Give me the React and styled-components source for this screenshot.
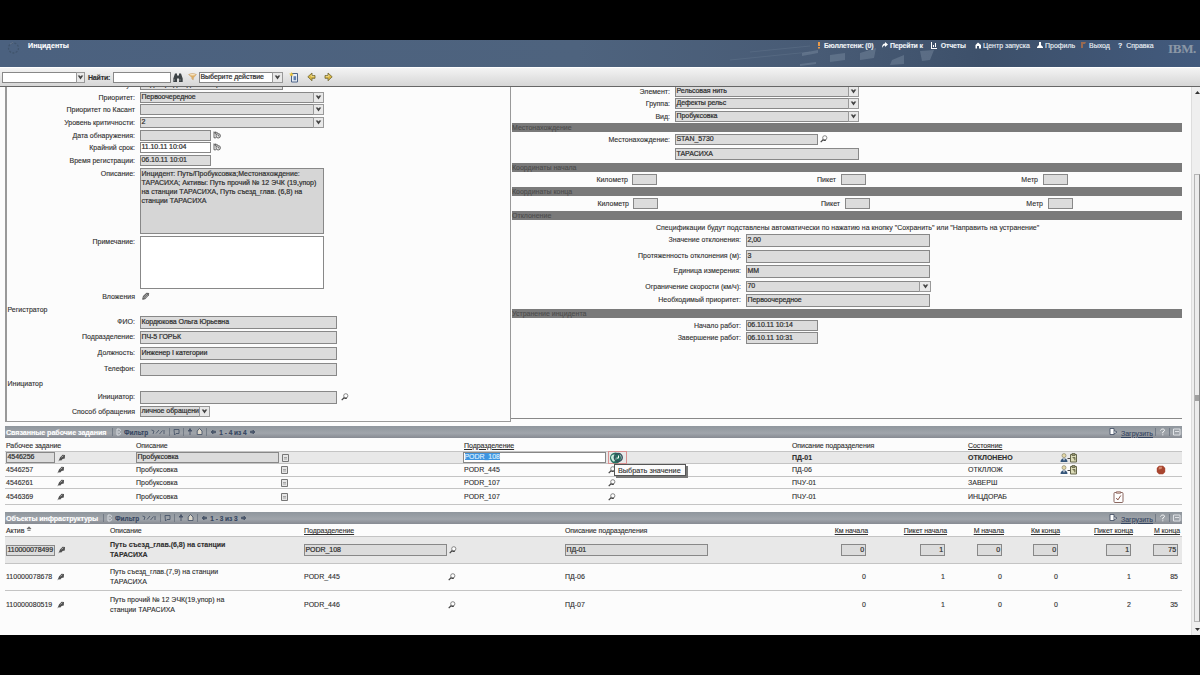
import React from "react";
import styled, { createGlobalStyle, css } from "styled-components";

const Global = createGlobalStyle`
  * { box-sizing: border-box; }
  body { margin: 0; background: #000; }
`;

const Screen = styled.div`
  width: 1200px;
  height: 675px;
  padding: 40px 0;
  background: #000;
  overflow: hidden;
  font-family: "Liberation Sans", sans-serif;
  font-size: 7px;
  color: #303030;
  -webkit-text-stroke: 0.12px currentColor;
  white-space: nowrap;
`;

/* ---------- header ---------- */
const Header = styled.header`
  position: relative;
  height: 27px;
  display: flex;
  justify-content: space-between;
  background: linear-gradient(90deg, #4b617f 0%, #4e637e 48%, #485b75 68%, #3d506a 82%, #425a7d 100%);
`;
const Skyline = styled.svg`
  position: absolute;
  left: 720px;
  top: 0;
`;
const Brand = styled.div`
  display: flex;
  padding: 1px 0 0 7px;
  gap: 6px;
  color: #fff;
  font-weight: bold;
  font-size: 7.2px;
  line-height: 10px;
`;
const Links = styled.nav`
  position: relative;
  display: flex;
  height: 11px;
  align-items: center;
  color: #eef2f6;
`;
const HeaderLink = styled.span`
  display: flex;
  align-items: center;
  gap: 2px;
  width: ${(p) => p.$w}px;
  font-weight: ${(p) => (p.$bold ? "bold" : "normal")};
  font-size: 7px;
  letter-spacing: ${(p) => (p.$bold ? -0.2 : 0)}px;
`;
const Logo = styled.span`
  font-family: "Liberation Serif", serif;
  font-weight: bold;
  font-size: 13px;
  line-height: 13px;
  height: 8px;
  width: 32px;
  letter-spacing: -0.3px;
  color: #8b97a6;
`;

/* ---------- toolbar ---------- */
const Toolbar = styled.div`
  height: 20px;
  display: flex;
  align-items: center;
  padding-left: 2px;
  border-top: 1px solid #fff;
  border-bottom: 1px solid #666;
  background: linear-gradient(#f4f4f4, #d6d6d6);
`;
const FindLabel = styled.span`
  width: 25px;
  margin-left: 3px;
  font-weight: bold;
  letter-spacing: -0.2px;
`;
const ToolIcon = styled.span`
  display: flex;
  margin-left: ${(p) => p.$gap}px;
`;

/* ---------- body ---------- */
const Body = styled.div`
  height: 548px;
  display: flex;
  background: #fcfcfc;
  overflow: hidden;
`;
const Content = styled.main`
  width: 1191px;
  padding-left: 5px;
`;
const Scrollbar = styled.aside`
  width: 9px;
  display: flex;
  flex-direction: column;
  align-items: center;
  padding: 4px 0 4px 2px;
  border-left: 1px solid #ddd;
  background: #efefef;
`;
const Thumb = styled.div`
  width: 6px;
  height: 448px;
  margin: auto 0 6px;
  display: flex;
  align-items: center;
  justify-content: center;
  border: 1px solid #b5b5b5;
  border-right-color: #8a8a8a;
  background: #ececec;
`;
const Panels = styled.section`
  display: flex;
  align-items: flex-start;
  height: 339px;
`;
const LeftPanel = styled.div`
  width: 506px;
  height: 335px;
  border: solid #999;
  border-width: 0 1px 1px 2px;
  overflow: hidden;
`;
const RightPanel = styled.div`
  width: 671px;
  height: 332px;
  border-bottom: 1px solid #888;
  overflow: hidden;
`;
const Row = styled.div`
  display: flex;
  align-items: flex-start;
  height: ${(p) => p.$h}px;
  margin-top: ${(p) => p.$mt || 0}px;
`;
const Label = styled.span`
  width: ${(p) => p.$w}px;
  margin-right: ${(p) => p.$gap ?? 5}px;
  text-align: right;
  line-height: 12px;
`;
const Field = styled.span`
  width: ${(p) => p.$w}px;
  height: ${(p) => p.$h || 11}px;
  padding: 0 ${(p) => (p.$right ? 1 : 0)}px 0 0.5px;
  border: 1px solid #888;
  background: ${(p) => (p.$white ? "#fff" : "#dcdcdc")};
  line-height: ${(p) => (p.$h || 11) - 2.5}px;
  text-align: ${(p) => (p.$right ? "right" : "left")};
  letter-spacing: -0.06px;
  -webkit-text-stroke: 0.22px currentColor;
  overflow: hidden;
`;
const Arrow = styled.span`
  width: ${(p) => p.$w || 11}px;
  height: ${(p) => p.$h || 11}px;
  margin-left: -1px;
  display: flex;
  align-items: center;
  justify-content: center;
  border: 1px solid #999;
  background: #e9e9e9;
`;
const Area = styled.div`
  width: 184px;
  height: ${(p) => p.$h}px;
  padding: 1px 0 0 0.5px;
  border: 1px solid #888;
  background: ${(p) => (p.$white ? "#fff" : "#d6d6d6")};
  line-height: 8.9px;
  -webkit-text-stroke: 0.2px currentColor;
`;
const GroupTitle = styled.div`
  height: ${(p) => p.$h}px;
  padding-left: 0.5px;
  line-height: 12px;
`;
const Bar = styled.div`
  height: 9px;
  margin: ${(p) => p.$mt}px 0 0 1px;
  background: #7a7a7a;
  color: #4c4c4c;
  line-height: 10px;
`;
const Note = styled.div`
  height: 14px;
  padding-left: 145px;
  line-height: 15px;
`;
const After = styled.span`
  display: flex;
  margin: ${(p) => p.$mt || 1}px 0 0 ${(p) => p.$ml || 2}px;
`;

/* ---------- tables ---------- */
const SectionBar = styled.div`
  width: 1177px;
  height: 12px;
  margin-top: ${(p) => p.$mt || 0}px;
  display: flex;
  align-items: center;
  background: linear-gradient(#8f969d, #a0a5ab 60%, #868a92);
  color: #354560;
`;
const SectionTitle = styled.span`
  width: ${(p) => p.$w}px;
  padding-left: 1px;
  color: #fff;
  font-weight: bold;
  font-size: 7.2px;
  letter-spacing: ${(p) => p.$ls}px;
`;
const BarTools = styled.span`
  display: flex;
  flex: 1;
  align-items: center;
  gap: 3px;
  font-weight: bold;
  font-size: 6.5px;
`;
const Sep = styled.i`
  width: 1px;
  height: 8px;
  background: #737b86;
`;
const BarRight = styled.span`
  display: flex;
  align-items: center;
  gap: 3px;
  padding-right: 1px;
`;
const Download = styled.span`
  text-decoration: underline;
  line-height: 14px;
  width: 31px;
  padding-top: 3px;
`;
const tableOne = css`
  grid-template-columns: 52px 78px 145px 182px 145px 184px 176px 92px 53px 43px 26px;
`;
const tableTwo = css`
  grid-template-columns: 52px 52px 194px 144px 117px 202px 101px 79px 57px 56px 73px 47px 2px;
`;
const GridRow = styled.div`
  ${(p) => (p.$two ? tableTwo : tableOne)}
  display: grid;
  grid-template-rows: 100%;
  align-items: center;
  width: 1177px;
  height: ${(p) => p.$h}px;
  padding-left: 1px;
  border-bottom: ${(p) => (p.$last ? 0 : 1)}px solid #c4c4c4;
  background: ${(p) => (p.$active ? "#e8e8e8" : "transparent")};
`;
const HeadRow = styled(GridRow)`
  padding-top: 2px;
`;
const Cell = styled.span`
  display: flex;
  justify-content: ${(p) => (p.$right ? "flex-end" : "flex-start")};
  padding-right: ${(p) => (p.$right ? 2 : 0)}px;
  font-weight: ${(p) => (p.$bold ? "bold" : "normal")};
  text-decoration: ${(p) => (p.$under ? "underline" : "none")};
  line-height: 10px;
  white-space: pre;
  margin-left: ${(p) => p.$ml || 0}px;
`;
const Heading = styled(Cell)`
  padding-right: 0;
  letter-spacing: -0.07px;
`;
const Selected = styled.mark`
  background: #3d94e0;
  color: #d5e9fb;
`;
const LookupHot = styled.span`
  position: relative;
  display: flex;
  align-items: center;
  width: 19px;
  height: 13px;
  border: 1px solid #d89090;
`;
const Tooltip = styled.span`
  position: absolute;
  left: 5px;
  top: 12px;
  z-index: 2;
  width: 72px;
  height: 12px;
  padding-left: 3px;
  border: 1px solid #555;
  background: #fbfbfb;
  box-shadow: 2px 2px 0 #777;
  font-size: 7.3px;
  line-height: 11px;
`;

/* ---------- icons ---------- */
const Chevron = () => (
  <svg width="7" height="5" viewBox="0 0 7 5">
    <path d="M.7.5h2l.8 1 .8-1h2L3.5 4.4z" fill="#444" />
  </svg>
);
const Lens = () => (
  <svg width="8" height="8" viewBox="0 0 8 8" fill="none">
    <circle cx="4.8" cy="2.8" r="2.1" stroke="#777" strokeWidth=".9" fill="#fff" />
    <path d="M3.3 4.5.7 7.2M3.5 5.4h2.3" stroke="#444" strokeWidth="1.2" />
  </svg>
);
const Pin = () => (
  <svg width="8" height="8" viewBox="0 0 8 8">
    <path d="M.4 7.6 2 3.600 4.600.800l2.400.2-.2 3.600-2.200.3-1.300 1.600-1.600-.3z" fill="#505050" />
    <path d="m3.4 3.300 2-1.500" stroke="#ccc" strokeWidth=".7" />
  </svg>
);
const Clip = () => (
  <svg width="9" height="9" viewBox="0 0 9 9">
    <path d="M1 7.500 2 4 5.500.700l2.700.2-.3 2.300L4.500 7l-2 .8z" fill="#666" />
    <path d="m2.500 6 3.500-4M4 6.300l3-3.500" stroke="#ccc" strokeWidth=".6" />
  </svg>
);
const DateIcon = () => (
  <svg width="8" height="8" viewBox="0 0 8 8" fill="none" stroke="#555" strokeWidth=".9">
    <path d="M1 .5v6.3h2M1 1.800h3.800M2.700.5v3" />
    <circle cx="5.2" cy="4.800" r="2.200" fill="#eee" />
    <path d="M5.2 3.500v1.400h1.200" />
  </svg>
);
const NoteIcon = () => (
  <svg width="7" height="8" viewBox="0 0 7 8">
    <path d="M.5.5h6v7h-6z" fill="#e6e6e6" stroke="#777" />
    <path d="M2 3.500h3M2 5h3" stroke="#888" strokeWidth=".7" />
  </svg>
);
const Binoculars = () => (
  <svg width="10" height="9" viewBox="0 0 10 9" fill="#3d4346">
    <path d="M2 .5h2v2h2v-2h2l1.700 5V9H6V5.500H4V9H.3V5.500z" />
    <path d="M1.200 6v2M7 6v2" stroke="#999" strokeWidth=".7" />
  </svg>
);
const Funnel = () => (
  <svg width="9" height="8" viewBox="0 0 9 8">
    <path d="M.5 1.500C3 .2 6 .2 8.500 1.500L5.700 4.600 5.200 7 3.800 6V4.400z" fill="#dfae63" stroke="#c9a880" strokeWidth=".5" />
    <ellipse cx="4.500" cy="1.800" rx="3" ry=".8" fill="#f5e6c8" />
  </svg>
);
const NewDoc = () => (
  <svg width="10" height="11" viewBox="0 0 10 11">
    <path d="M2.500 1.500h6v8.500h-6z" fill="#e9eef5" stroke="#4d6489" />
    <path d="M4.500 4.200h2.600v4H4.500z" fill="#5f7fae" />
    <path d="m2.400 0 .7 1.600 1.700.3-1.400 1 .3 1.600-1.400-1L.8 4.400l.5-1.600L0 1.700l1.700-.1z" fill="#e6c33f" />
  </svg>
);
const Move = ({ back }) => (
  <svg width="9" height="10" viewBox="0 0 9 10">
    <g transform={back ? "matrix(-1 0 0 1 9 0)" : undefined}>
      <path d="M1 3.500h3V1l4.200 3.800L4 8.800V6.300H1z" fill="#d9b642" stroke="#6d6435" strokeWidth=".8" />
      <path d="M1.800 4.300h3V2.800" stroke="#f6eab0" strokeWidth=".7" fill="none" />
    </g>
  </svg>
);
const Ring = () => (
  <svg width="15" height="15" viewBox="0 0 15 15" fill="none" stroke="#40546c">
    <circle cx="6.500" cy="7" r="5" strokeWidth="1.300" strokeDasharray="2 1.400" />
    <path d="m3 3 3-1.500" stroke="#657489" />
  </svg>
);
const Globe = () => (
  <svg width="15" height="12" viewBox="0 0 15 12">
    <circle cx="6.500" cy="6" r="5.500" fill="#27705f" />
    <path d="M2 5C3 2.500 5 2 6.500 3.200L5 5.500l2.500 2-2.500 2.300C3 9 2 7 2 5z" fill="#c9ecdd" />
    <circle cx="9.300" cy="5.500" r="3.900" fill="none" stroke="#35505c" strokeWidth="1.500" />
    <path d="M9.500 3.500v2.600H7.500" stroke="#fff" fill="none" />
  </svg>
);
const Assign = () => (
  <svg width="18" height="10" viewBox="0 0 18 10">
    <circle cx="4" cy="2.600" r="2" fill="#e5d9a8" stroke="#77745d" strokeWidth=".6" />
    <path d="M.5 9c0-5 7-5 7 0z" fill="#35567a" />
    <path d="M3 5.500 4 8l1-2.500z" fill="#e8e8e8" />
    <path d="M7.500 5.500h2.500" stroke="#444" />
    <path d="M10.500 1.500h6v7.500h-6z" fill="#dcdcb8" stroke="#66674b" />
    <path d="M12 .5h3v2h-3zM12.500 4.500h2.500v3" stroke="#55563f" fill="#99966c" strokeWidth=".7" />
  </svg>
);
const CheckDoc = () => (
  <svg width="11" height="12" viewBox="0 0 11 12">
    <rect x="1" y="1.500" width="9" height="10" rx="1" fill="#fff" stroke="#8a6760" />
    <path d="M3.500.5h4v2h-4z" fill="#c9a79c" stroke="#8a6760" strokeWidth=".5" />
    <path d="m3.300 7 1.500 2 3-4.500" fill="none" stroke="#8a564a" />
  </svg>
);
const Stop = () => (
  <svg width="10" height="10" viewBox="0 0 10 10">
    <path d="M3 .8h4L9.200 3v4L7 9.200H3L.8 7V3z" fill="#a8452f" />
    <path d="M3.200 1.800h3L5.500 4 2.500 4.500z" fill="#d48a70" />
  </svg>
);
const BarIcon = ({ d, w = 7, fill = "none", stroke = "#4a566a" }) => (
  <svg width={w} height="8" viewBox={`0 0 ${w} 8`}>
    <path d={d} fill={fill} stroke={stroke} strokeWidth=".9" />
  </svg>
);
const HeadIcon = ({ d, fill = "#fff" }) => (
  <svg width="6" height="7" viewBox="0 0 6 7">
    <path d={d} fill={fill} />
  </svg>
);
const SortMark = () => (
  <svg width="6" height="8" viewBox="0 0 6 8">
    <path d="M1 2.800 3 .8l2 2zM1.500 4.500h3" fill="#777" stroke="#555" strokeWidth=".7" />
  </svg>
);

/* ---------- parts ---------- */
const Select = ({ w, value, h, aw }) => (
  <>
    <Field $w={w} $h={h}>{value}</Field>
    <Arrow $h={h} $w={aw}><Chevron /></Arrow>
  </>
);

const Section = ({ title, tw, ls, pages, mt }) => (
  <SectionBar $mt={mt}>
    <SectionTitle $w={tw} $ls={ls}>{title}</SectionTitle>
    <BarTools>
      <Sep />
      <BarIcon d="M1 1h2.500L6 4 3.500 7H1zM3 3v2" stroke="#dfe2e6" w={5} />
      <span>Фильтр</span>
      <BarIcon d="M.5 2 3 3l-1 3M5 5.500 8 2M8.500 6l3-3.500M13 2v4" w={15} />
      <Sep />
      <BarIcon d="M1 1.500h5v4H3L1.500 7z" />
      <Sep />
      <BarIcon d="M3 0v7M1 3l2-2 2 2z" w={6} fill="#4a566a" />
      <BarIcon d="M3.500.5 6 3v3.500H1.200V3z" fill="#ded9cc" />
      <Sep />
      <BarIcon d="M1 4l2-2v1.200h2.500v1.600H3V6z" w={6} fill="#4a566a" />
      <span>{pages}</span>
      <BarIcon d="M5 4 3 2v1.200H.5v1.600H3V6z" w={6} fill="#4a566a" />
    </BarTools>
    <BarRight>
      <BarIcon d="M1 .5h4v6H1zM5 2.500 8 4 5 6" w={9} fill="#fff" />
      <Download>Загрузить</Download>
      <Sep />
      <BarIcon d="M1.500 2.500C2 .5 6 .5 5.500 2.700L3.800 4v1.300M3.800 6.300v1" stroke="#fff" />
      <Sep />
      <BarIcon d="M.5 1h6.500v6H.5zM2 3.500h4" w={8} stroke="#e6e9ec" />
    </BarRight>
  </SectionBar>
);

const workOrders = [
  { id: "4546257", dept: "PODR_445", desc: "ПД-06", state: "ОТКЛЛОЖ", assign: true, stop: true, h: 13 },
  { id: "4546261", dept: "PODR_107", desc: "ПЧУ-01", state: "ЗАВЕРШ", h: 12 },
  { id: "4546369", dept: "PODR_107", desc: "ПЧУ-01", state: "ИНЦДОРАБ", check: true, h: 16 },
];
const assets = [
  { id: "110000078678", name: "Путь съезд_глав.(7,9) на станции\nТАРАСИХА", dept: "PODR_445", desc: "ПД-06", n: [0, 1, 0, 0, 1, 85], h: 27 },
  { id: "110000080519", name: "Путь прочий № 12 ЭЧК(19,упор) на\nстанции ТАРАСИХА", dept: "PODR_446", desc: "ПД-07", n: [0, 1, 0, 0, 2, 35], h: 27, last: true },
];

const LW = 128;
const LeftForm = () => (
  <LeftPanel>
    <Row $h={13} $mt={-8}><Label $w={LW}>Статус:</Label><Field $w={143}>Подтвержден диспетчером</Field></Row>
    <Row $h={12}><Label $w={LW}>Приоритет:</Label><Select w={174} value="Первоочередное" /></Row>
    <Row $h={13}><Label $w={LW}>Приоритет по Касант</Label><Select w={174} /></Row>
    <Row $h={13}><Label $w={LW}>Уровень критичности:</Label><Select w={174} value="2" /></Row>
    <Row $h={12}><Label $w={LW}>Дата обнаружения:</Label><Field $w={71} /><After><DateIcon /></After></Row>
    <Row $h={13}><Label $w={LW}>Крайний срок:</Label><Field $w={71} $white>11.10.11 10:04</Field><After><DateIcon /></After></Row>
    <Row $h={13}><Label $w={LW}>Время регистрации:</Label><Field $w={71}>06.10.11 10:01</Field></Row>
    <Row $h={68}>
      <Label $w={LW}>Описание:</Label>
      <Area $h={66}>
        Инцидент: Путь/Пробуксовка;Местонахождение:<br />
        ТАРАСИХА; Активы: Путь прочий № 12 ЭЧК (19,упор)<br />
        на станции ТАРАСИХА, Путь съезд_глав. (6,8) на<br />
        станции ТАРАСИХА
      </Area>
    </Row>
    <Row $h={55}><Label $w={LW}>Примечание:</Label><Area $h={53} $white /></Row>
    <Row $h={13}><Label $w={LW}>Вложения</Label><After $ml={1}><Clip /></After></Row>
    <GroupTitle $h={12}>Регистратор</GroupTitle>
    <Row $h={15}><Label $w={LW}>ФИО:</Label><Field $w={197} $h={13}>Кордюкова Ольга Юрьевна</Field></Row>
    <Row $h={16}><Label $w={LW}>Подразделение:</Label><Field $w={197} $h={13}>ПЧ-5 ГОРЬК</Field></Row>
    <Row $h={16}><Label $w={LW}>Должность:</Label><Field $w={197} $h={13}>Инженер I категории</Field></Row>
    <Row $h={15}><Label $w={LW}>Телефон:</Label><Field $w={197} $h={13} /></Row>
    <GroupTitle $h={13}>Инициатор</GroupTitle>
    <Row $h={15}><Label $w={LW}>Инициатор:</Label><Field $w={197} $h={13} /><After $ml={4} $mt={2}><Lens /></After></Row>
    <Row $h={12}><Label $w={LW}>Способ обращения</Label><Select w={60} value="личное обращени" /></Row>
  </LeftPanel>
);

const Coords = ({ shift }) => (
  <Row $h={11} $mt={2}>
    <Label $w={shift ? 118 : 117} $gap={4}>Километр</Label><Field $w={25} />
    <Label $w={shift ? 182 : 179}>Пикет</Label><Field $w={25} />
    <Label $w={shift ? 173 : 172}>Метр</Label><Field $w={25} />
  </Row>
);

const RightForm = () => (
  <RightPanel>
    <Row $h={12} $mt={-1}><Label $w={159}>Элемент:</Label><Select w={174} value="Рельсовая нить" /></Row>
    <Row $h={13}><Label $w={159}>Группа:</Label><Select w={174} value="Дефекты рельс" /></Row>
    <Row $h={11}><Label $w={159}>Вид:</Label><Select w={174} value="Пробуксовка" /></Row>
    <Bar $mt={1}>Местонахождение</Bar>
    <Row $h={14} $mt={2}><Label $w={159}>Местонахождение:</Label><Field $w={143}>STAN_5730</Field><After><Lens /></After></Row>
    <Row $h={12}><Label $w={159} /><Field $w={184} $h={12}>ТАРАСИХА</Field></Row>
    <Bar $mt={3}>Координаты начала</Bar>
    <Coords />
    <Bar $mt={2}>Координаты конца</Bar>
    <Coords shift />
    <Bar $mt={2}>Отклонение</Bar>
    <Note>Спецификации будут подставлены автоматически по нажатию на кнопку "Сохранить" или "Направить на устранение"</Note>
    <Row $h={16}><Label $w={230}>Значение отклонения:</Label><Field $w={184} $h={13}>2,00</Field></Row>
    <Row $h={15}><Label $w={230}>Протяженность отклонения (м):</Label><Field $w={184} $h={13}>3</Field></Row>
    <Row $h={16}><Label $w={230}>Единица измерения:</Label><Field $w={184} $h={13}>ММ</Field></Row>
    <Row $h={13}><Label $w={230}>Ограничение скорости (км/ч):</Label><Select w={174} aw={12} value="70" /></Row>
    <Row $h={13}><Label $w={230}>Необходимый приоритет:</Label><Field $w={184} $h={13}>Первоочередное</Field></Row>
    <Bar $mt={2}>Устранение инцидента</Bar>
    <Row $h={12} $mt={2}><Label $w={230}>Начало работ:</Label><Field $w={72}>06.10.11 10:14</Field></Row>
    <Row $h={12}><Label $w={230}>Завершение работ:</Label><Field $w={72} $h={12}>06.10.11 10:31</Field></Row>
  </RightPanel>
);

export default function App() {
  return (
    <Screen>
      <Global />
      <Header>
        <Skyline width="480" height="27" viewBox="0 0 480 27" fill="#8193a8">
          <path d="M30 12 90 6M10 20l80-8" stroke="#8193a8" strokeWidth=".7" opacity=".3" />
          <g opacity=".4">
            <path d="M82 13l16-3v3l-16 3zM110 15l15-2v7l-15 2zM140 13l16-5-2 10-14 2zM172 20l12-5v9l-14 1zM200 11l14-1-4 10-8 1zM80 24l16-2v2l-16 2z" />
          </g>
        </Skyline>
        <Brand><Ring />Инциденты</Brand>
        <Links>
          <HeaderLink $w={66} $bold><HeadIcon d="M2 0h2v4H2zM2 5h2v1.500H2z" fill="#e89a4a" />Бюллетени: (0)</HeaderLink>
          <HeaderLink $w={49} $bold><HeadIcon d="M0 6c0-3 1-4.500 3-4.500V0l3 2.500L3 5V3.500C2 3.500 1 4 0 6z" />Перейти к</HeaderLink>
          <HeaderLink $w={44} $bold><HeadIcon d="M0 0h1v6h5v1H0zM2 3h1v2H2zM4 1h1v4H4z" />&nbsp;Отчеты</HeaderLink>
          <HeaderLink $w={62}><HeadIcon d="M3 .5 6 3v3.500H4V4H2v2.500H.5V3z" />Центр запуска</HeaderLink>
          <HeaderLink $w={44}><HeadIcon d="M2 0h2v3l2 2v1H0V5l2-2z" />Профиль</HeaderLink>
          <HeaderLink $w={37}><HeadIcon d="M0 0h5L4 2H2v4H0z" fill="#9a6a50" />Выход</HeaderLink>
          <HeaderLink $w={50}><b>?</b>&nbsp;Справка</HeaderLink>
          <Logo>IBM.</Logo>
        </Links>
      </Header>
      <Toolbar>
        <Field $w={75} $white /><Arrow $w={9}><Chevron /></Arrow>
        <FindLabel>Найти:</FindLabel>
        <Field $w={58} $white />
        <ToolIcon $gap={2}><Binoculars /></ToolIcon>
        <ToolIcon $gap={5}><Funnel /></ToolIcon>
        <ToolIcon $gap={2}><Field $w={74} $white>Выберите действие</Field><Arrow><Chevron /></Arrow></ToolIcon>
        <ToolIcon $gap={6}><NewDoc /></ToolIcon>
        <ToolIcon $gap={8}><Move back /></ToolIcon>
        <ToolIcon $gap={8}><Move /></ToolIcon>
      </Toolbar>
      <Body>
        <Content>
          <Panels><LeftForm /><RightForm /></Panels>
          <Section title="Связанные рабочие задания" tw={107} ls={-0.09} pages="1 - 4 из 4" />
          <HeadRow $h={14}>
            <Heading>Рабочее задание</Heading><Cell /><Heading>Описание</Heading><Cell />
            <Heading $under $ml={1}>Подразделение</Heading><Cell />
            <Heading>Описание подразделения</Heading><Heading $under>Состояние</Heading>
          </HeadRow>
          <GridRow $h={12} $active>
            <Field $w={49}>4546256</Field><Cell><Pin /></Cell>
            <Field $w={143}>Пробуксовка</Field><Cell $ml={1}><NoteIcon /></Cell>
            <Field $w={143} $white><Selected>PODR_108</Selected></Field>
            <LookupHot><Globe /><Tooltip>Выбрать значение</Tooltip></LookupHot>
            <Cell $bold>ПД-01</Cell><Cell $bold>ОТКЛОНЕНО</Cell><Cell><Assign /></Cell>
          </GridRow>
          {workOrders.map((r) => (
            <GridRow key={r.id} $h={r.h}>
              <Cell>{r.id}</Cell><Cell $ml={-1}><Pin /></Cell><Cell>Пробуксовка</Cell><Cell><NoteIcon /></Cell>
              <Cell $ml={1}>{r.dept}</Cell><Cell><Lens /></Cell><Cell>{r.desc}</Cell><Cell>{r.state}</Cell>
              <Cell>{r.assign && <Assign />}</Cell><Cell>{r.check && <CheckDoc />}</Cell><Cell>{r.stop && <Stop />}</Cell>
            </GridRow>
          ))}
          <Section mt={7} title="Объекты инфраструктуры" tw={98} ls={-0.15} pages="1 - 3 из 3" />
          <HeadRow $two $h={13}>
            <Heading>Актив&nbsp;<SortMark /></Heading><Cell /><Heading>Описание</Heading><Heading $under>Подразделение</Heading><Cell />
            <Heading>Описание подразделения</Heading>
            {["Км начала", "Пикет начала", "М начала", "Км конца", "Пикет конца", "М конца"].map((t) => (
              <Heading key={t} $right $under>{t}</Heading>
            ))}
          </HeadRow>
          <GridRow $two $h={27} $active>
            <Field $w={49}>110000078499</Field><Cell><Pin /></Cell>
            <Cell $bold>{"Путь съезд_глав.(6,8) на станции\nТАРАСИХА"}</Cell>
            <Field $w={143} $h={12}>PODR_108</Field><Cell $ml={1}><Lens /></Cell>
            <Field $w={143} $h={12}>ПД-01</Field>
            {[0, 1, 0, 0, 1, 75].map((n, i) => (
              <Cell key={i} $right><Field $w={25} $h={12} $right>{n}</Field></Cell>
            ))}
          </GridRow>
          {assets.map((r) => (
            <GridRow key={r.id} $two $h={r.h} $last={r.last}>
              <Cell>{r.id}</Cell><Cell $ml={-1}><Pin /></Cell><Cell>{r.name}</Cell><Cell>{r.dept}</Cell>
              <Cell><Lens /></Cell><Cell>{r.desc}</Cell>
              {r.n.map((n, i) => <Cell key={i} $right>{n}</Cell>)}
            </GridRow>
          ))}
        </Content>
        <Scrollbar>
          <svg width="5" height="3" viewBox="0 0 5 3"><path d="M0 3 2.500 0 5 3z" fill="#333" /></svg>
          <Thumb><svg width="4" height="7" viewBox="0 0 4 7"><path d="M0 1h4M0 3h4M0 5h4" stroke="#555" /></svg></Thumb>
          <svg width="5" height="3" viewBox="0 0 5 3"><path d="m0 0 2.500 3L5 0z" fill="#333" /></svg>
        </Scrollbar>
      </Body>
    </Screen>
  );
}
